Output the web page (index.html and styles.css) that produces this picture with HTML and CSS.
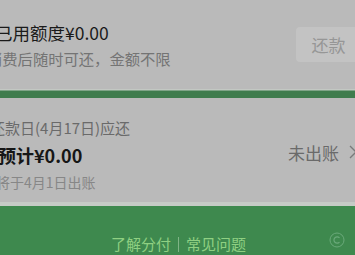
FILE: index.html
```html
<!DOCTYPE html>
<html lang="zh">
<head>
<meta charset="utf-8">
<link rel="stylesheet" href="styles.css">
</head>
<body>
<div class="page">
  <section class="quota">
    <div class="quota-text">
      <div class="used">已用额度¥0.00</div>
      <div class="hint">消费后随时可还，金额不限</div>
    </div>
    <div class="repay-btn">还款</div>
  </section>
  <div class="band"></div>
  <section class="bill">
    <div class="bill-text">
      <div class="due">还款日(4月17日)应还</div>
      <div class="amount">预计¥0.00</div>
      <div class="note">将于4月1日出账</div>
    </div>
    <div class="status">未出账<svg class="chev" width="8" height="14" viewBox="0 0 8 14"><path d="M1 1 L7 7 L1 13" fill="none" stroke="#7a7a7a" stroke-width="1.3"/></svg></div>
  </section>
  <footer class="foot">
    <div class="links"><span>了解分付</span><span class="sep"></span><span>常见问题</span></div>
    <svg class="foot-icon" width="16" height="16" viewBox="0 0 16 16"><circle cx="8" cy="8" r="7" fill="none" stroke="#6aa97a" stroke-width="1"/><path d="M10.5 5.8 A3.2 3.2 0 1 0 10.5 10.2" fill="none" stroke="#6aa97a" stroke-width="1.2"/></svg>
  </footer>
</div>
</body>
</html>
```

FILE: styles.css
```css
html, body {
  margin: 0;
  padding: 0;
  background: #bababa;
  overflow: hidden;
}
.page {
  width: 355px;
  height: 255px;
  display: flex;
  flex-direction: column;
  font-family: "Noto Sans CJK SC", "Noto Sans", sans-serif;
  overflow: hidden;
}
.quota {
  height: 90px;
  display: flex;
  align-items: flex-start;
  justify-content: space-between;
  border-bottom: 1px solid #c3c8c3;
  box-sizing: border-box;
  flex: none;
}
.quota-text {
  margin-left: -5px;
  padding-top: 22px;
}
.used {
  font-size: 17.5px;
  line-height: 22px;
  color: #1a1a1a;
}
.hint {
  margin-left: -8px;
  margin-top: 4px;
  font-size: 15.3px;
  line-height: 20px;
  color: #747474;
}
.repay-btn {
  margin-top: 27px;
  margin-right: -6px;
  width: 65px;
  height: 35px;
  background: #c3c3c3;
  border-radius: 4px;
  color: #969696;
  font-size: 17px;
  line-height: 35px;
  text-align: center;
}
.band {
  height: 8px;
  flex: none;
  background: #3f7c4d;
  border-top: 1px solid #7fa487;
  box-sizing: border-box;
}
.bill {
  height: 108px;
  flex: none;
  display: flex;
  align-items: center;
  justify-content: space-between;
  border-bottom: 4px solid #c6cbc6;
  box-sizing: border-box;
}
.bill-text {
  padding-top: 8px;
}
.due {
  margin-left: -10px;
  font-size: 15px;
  line-height: 20px;
  color: #6a6a6a;
}
.amount {
  margin-left: -2px;
  margin-top: 5px;
  font-size: 18px;
  line-height: 24px;
  font-weight: 700;
  color: #161616;
}
.note {
  margin-left: -4px;
  margin-top: 6px;
  font-size: 14px;
  line-height: 18px;
  color: #878787;
}
.status {
  display: flex;
  align-items: center;
  gap: 10px;
  margin-right: -2px;
  margin-top: 4px;
  font-size: 17px;
  color: #6a6a6a;
}
.foot {
  flex: 1;
  background: #3e894e;
  display: flex;
  align-items: flex-end;
  justify-content: center;
  position: relative;
  padding-bottom: 1px;
}
.links {
  display: flex;
  align-items: center;
  gap: 7px;
  margin-left: 2px;
  font-size: 15px;
  line-height: 20px;
  color: #8fd082;
}
.sep {
  width: 1px;
  height: 15px;
  background: #7fb486;
}
.foot-icon {
  position: absolute;
  right: 10px;
  bottom: 7px;
}
```
